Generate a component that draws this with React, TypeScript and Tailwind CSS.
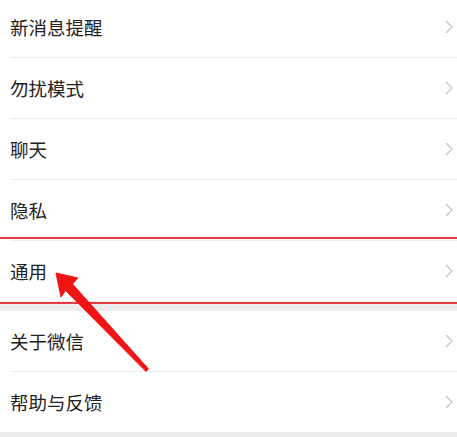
const groupOne = ["新消息提醒", "勿扰模式", "聊天", "隐私", "通用"];
const groupTwo = ["关于微信", "帮助与反馈"];

function Chevron() {
  return (
    <svg width="8" height="14" viewBox="0 0 8 14" className="shrink-0">
      <polyline points="1,1 7,7 1,13" fill="none" stroke="#c2c2c2" strokeWidth="1.2" />
    </svg>
  );
}

function Row({ label, last, marked }: { label: string; last: boolean; marked?: boolean }) {
  return (
    <div className="relative">
      <div
        className={
          last
            ? "ml-[10px] h-[60px] flex items-center justify-between pr-[4px]"
            : "ml-[10px] h-[61px] border-b border-[#ececec] flex items-center justify-between pr-[4px]"
        }
      >
        <span className="text-[18.5px] leading-none text-[#222222]">{label}</span>
        <Chevron />
      </div>
      {marked && (
        <div className="absolute inset-x-0 top-[-4px] bottom-[-3px] border-y-2 border-[#e23a44] z-10 pointer-events-none" />
      )}
    </div>
  );
}

export default function App() {
  return (
    <div
      className="relative w-[457px] h-[437px] overflow-hidden bg-[#ededed]"
      style={{ fontFamily: '"Noto Sans CJK SC", "Noto Sans", sans-serif' }}
    >
      <div className="-mt-[3px] bg-white">
        {groupOne.map((label, i) => (
          <Row key={label} label={label} last={i === groupOne.length - 1} marked={label === "通用"} />
        ))}
      </div>
      <div className="h-[10px]" />
      <div className="bg-white">
        {groupTwo.map((label, i) => (
          <Row key={label} label={label} last={i === groupTwo.length - 1} />
        ))}
      </div>

      <svg
        className="absolute inset-0 z-20 pointer-events-none"
        width="457"
        height="437"
        viewBox="0 0 457 437"
      >
        <polygon
          points="56,273 78,278 72.5,284 148.5,369 146,371.5 65.5,290.5 61,297"
          fill="#f01414"
          stroke="#f01414"
          strokeWidth="1"
          strokeLinejoin="round"
        />
      </svg>
    </div>
  );
}
